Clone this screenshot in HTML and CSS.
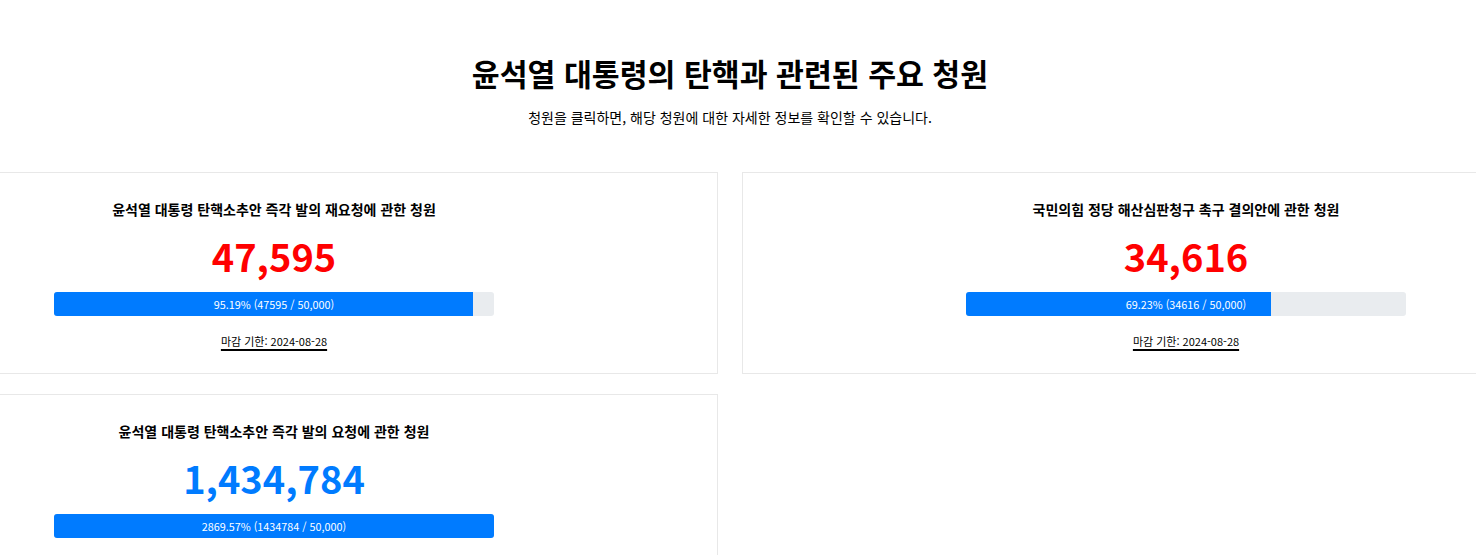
FILE: index.html
```html
<!DOCTYPE html>
<html lang="ko">
<head>
<meta charset="utf-8">
<title>윤석열 대통령의 탄핵과 관련된 주요 청원</title>
<link rel="stylesheet" href="styles.css">
</head>
<body>
<div class="page">
  <header class="header">
    <h1 class="title">윤석열 대통령의 탄핵과 관련된 주요 청원</h1>
    <p class="subtitle">청원을 클릭하면, 해당 청원에 대한 자세한 정보를 확인할 수 있습니다.</p>
  </header>
  <main class="grid">
    <section class="card">
      <h2 class="card-title">윤석열 대통령 탄핵소추안 즉각 발의 재요청에 관한 청원</h2>
      <div class="count count-red">47,595</div>
      <div class="bar">
        <div class="bar-fill" style="width: 95.19%"></div>
        <span class="bar-label">95.19% (47595 / 50,000)</span>
      </div>
      <div class="deadline"><span class="deadline-text">마감 기한: 2024-08-28</span></div>
    </section>
    <section class="card">
      <h2 class="card-title">국민의힘 정당 해산심판청구 촉구 결의안에 관한 청원</h2>
      <div class="count count-red">34,616</div>
      <div class="bar">
        <div class="bar-fill" style="width: 69.23%"></div>
        <span class="bar-label">69.23% (34616 / 50,000)</span>
      </div>
      <div class="deadline"><span class="deadline-text">마감 기한: 2024-08-28</span></div>
    </section>
    <section class="card">
      <h2 class="card-title">윤석열 대통령 탄핵소추안 즉각 발의 요청에 관한 청원</h2>
      <div class="count count-blue">1,434,784</div>
      <div class="bar">
        <div class="bar-fill" style="width: 100%"></div>
        <span class="bar-label">2869.57% (1434784 / 50,000)</span>
      </div>
      <div class="deadline"><span class="deadline-text">마감 기한: 2024-08-28</span></div>
    </section>
  </main>
</div>
</body>
</html>
```

FILE: styles.css
```css
* { box-sizing: border-box; }
html, body {
  margin: 0;
  padding: 0;
  background: #ffffff;
  overflow: hidden;
}
body {
  font-family: "Noto Sans CJK KR", "Noto Sans", sans-serif;
  color: #000;
}
.page {
  width: 1460px;
}
.header {
  padding-top: 56px;
  text-align: center;
}
.title {
  margin: 0;
  font-size: 30.3px;
  line-height: 34px;
  font-weight: 700;
}
.subtitle {
  margin: 17px 0 0;
  font-size: 14px;
  line-height: 20px;
}
.grid {
  display: grid;
  grid-template-columns: 888px 888px;
  justify-content: center;
  column-gap: 24px;
  row-gap: 20px;
  margin-top: 45px;
}
.card {
  border: 1px solid #e8e8e8;
  background: #fff;
  padding: 26px 0 24px;
  display: flex;
  flex-direction: column;
  align-items: center;
}
.card-title {
  margin: 0;
  font-size: 14px;
  line-height: 20px;
  font-weight: 600;
}
.count {
  margin-top: 13px;
  font-size: 38px;
  line-height: 48px;
  font-weight: 700;
}
.count-red { color: #ff0000; }
.count-blue { color: #007bff; }
.bar {
  margin-top: 12px;
  width: 440px;
  height: 24px;
  background: #e9ecef;
  border-radius: 3px;
  overflow: hidden;
  display: flex;
  align-items: center;
  justify-content: center;
  position: relative;
}
.bar-fill {
  position: absolute;
  left: 0;
  top: 0;
  bottom: 0;
  background: #007bff;
}
.bar-label {
  position: relative;
  color: #fff;
  font-size: 10.8px;
  line-height: 24px;
}
.deadline {
  margin-top: 17px;
  font-size: 11px;
  line-height: 16px;
}
.deadline-text {
  text-decoration: underline;
  text-decoration-thickness: 2px;
  text-underline-offset: 3px;
}
```
